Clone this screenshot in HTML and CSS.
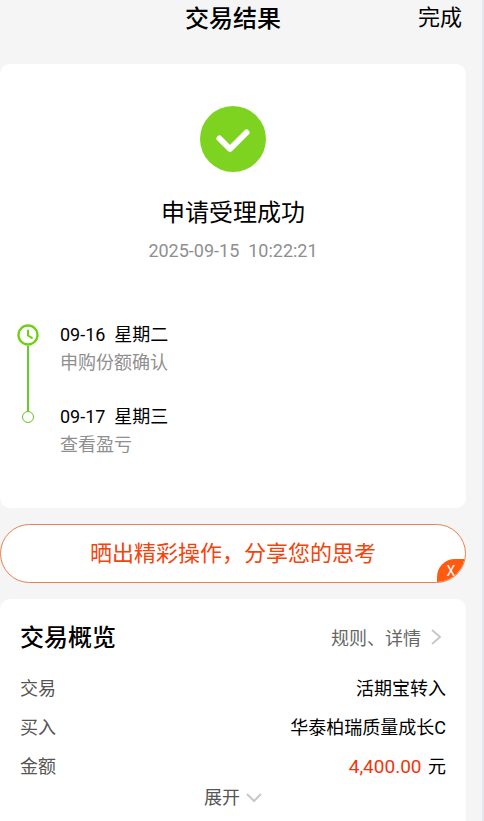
FILE: index.html
```html
<!DOCTYPE html>
<html lang="zh-CN">
<head>
    <meta charset="UTF-8">
    <meta name="viewport" content="width=device-width, initial-scale=1">
    <title>交易结果</title>
    <link rel="stylesheet" href="styles.css">
</head>
<body>
    <header class="topbar">
        <h1>交易结果</h1>
        <a class="done" href="#">完成</a>
    </header>

    <main>
        <section class="card result">
            <svg class="success-icon" viewBox="0 0 66 66" aria-hidden="true">
                <circle cx="33" cy="33" r="33" fill="#7ed321"/>
                <path d="M19.500 32.500L30 43L46.500 26.500" fill="none" stroke="#fff" stroke-width="6" stroke-linecap="round" stroke-linejoin="round"/>
            </svg>
            <h2>申请受理成功</h2>
            <time class="time">2025-09-15&nbsp; 10:22:21</time>

            <ol class="timeline">
                <li>
                    <div class="marker">
                        <svg class="clock" viewBox="0 0 22 22" aria-hidden="true">
                            <circle cx="11" cy="11" r="9.500" fill="none" stroke="#6fd010" stroke-width="2.300"/>
                            <path d="M11 6.500V11.500L14.800 13.900" fill="none" stroke="#6fd010" stroke-width="2" stroke-linecap="round" stroke-linejoin="round"/>
                        </svg>
                        <span class="line"></span>
                    </div>
                    <div class="step">
                        <p class="day">09-16&nbsp; 星期二</p>
                        <p class="desc">申购份额确认</p>
                    </div>
                </li>
                <li>
                    <div class="marker">
                        <span class="line"></span>
                        <span class="dot"></span>
                    </div>
                    <div class="step">
                        <p class="day">09-17&nbsp; 星期三</p>
                        <p class="desc">查看盈亏</p>
                    </div>
                </li>
            </ol>
        </section>

        <div class="banner">
            <a href="#">晒出精彩操作，分享您的思考</a>
            <button class="close" type="button" aria-label="关闭">X</button>
        </div>

        <section class="card overview">
            <div class="overview-header">
                <h2>交易概览</h2>
                <a class="more" href="#">规则、详情
                    <svg class="arrow-right" viewBox="0 0 10 16" aria-hidden="true">
                        <path d="M1 1L9 8L1 15" fill="none" stroke="#c8c8c8" stroke-width="2"/>
                    </svg>
                </a>
            </div>
            <dl class="rows">
                <div class="row">
                    <dt>交易</dt>
                    <dd>活期宝转入</dd>
                </div>
                <div class="row">
                    <dt>买入</dt>
                    <dd>华泰柏瑞质量成长C</dd>
                </div>
                <div class="row">
                    <dt>金额</dt>
                    <dd><span class="amount">4,400.00</span> 元</dd>
                </div>
            </dl>
            <button class="expand" type="button">展开
                <svg class="arrow-down" viewBox="0 0 16 10" aria-hidden="true">
                    <path d="M1 1L8 8L15 1" fill="none" stroke="#c8c8c8" stroke-width="2"/>
                </svg>
            </button>
        </section>
    </main>
</body>
</html>
```
FILE: styles.css
```css
* {
    box-sizing: border-box;
}
body {
    display: flex;
    flex-direction: column;
    min-height: 100vh;
    margin: 0;
    padding-right: 16px;
    border-right: 2px solid #e4e8ec;
    background: #f5f5f5;
    color: #000;
    font-family: Roboto, "Noto Sans CJK SC", sans-serif;
    font-size: 18px;
}
h1, h2, p, ol, dl, dd {
    margin: 0;
    padding: 0;
}
h1, h2 {
    font-size: 24px;
    line-height: 36px;
    font-weight: 500;
}
a {
    color: inherit;
    text-decoration: none;
}
button {
    padding: 0;
    border: 0;
    background: none;
    font-family: inherit;
    cursor: pointer;
}
svg {
    display: block;
}
main {
    display: flex;
    flex: 1;
    flex-direction: column;
    gap: 16px;
}

.topbar {
    display: grid;
    grid-template-columns: 1fr auto 1fr;
    height: 64px;
    padding: 0 4px;
}
.topbar h1 {
    grid-column: 2;
    line-height: 38px;
}
.done {
    justify-self: end;
    font-size: 22px;
    line-height: 36px;
}

.card {
    border-radius: 10px;
    background: #fff;
}

/* Result */
.result {
    display: flex;
    flex-direction: column;
    align-items: center;
    padding: 42px 16px 49px;
}
.success-icon {
    width: 66px;
    height: 66px;
    margin-bottom: 23px;
}
.result h2 {
    font-weight: 400;
}
.time {
    margin-top: 8px;
    color: #8f8f8f;
    line-height: 24px;
}
.timeline {
    align-self: stretch;
    margin-top: 58px;
    list-style: none;
}
.timeline li {
    display: flex;
    gap: 20px;
}
.timeline li:first-child .step {
    padding-bottom: 26px;
}
.marker {
    display: flex;
    flex-direction: column;
    align-items: center;
    width: 24px;
}
.clock {
    width: 22px;
    height: 22px;
    margin-top: 3px;
}
.line {
    flex: 1;
    width: 2px;
    background: #6cc832;
}
.timeline li:last-child .line {
    flex: none;
    height: 8px;
}
.dot {
    width: 12px;
    height: 12px;
    border: 1px solid #62c41c;
    border-radius: 50%;
}
.step {
    line-height: 28px;
}
.desc {
    color: #8f8f8f;
}

/* Share banner */
.banner {
    position: relative;
    overflow: hidden;
    border: 1px solid #e58150;
    border-radius: 30px;
    background: #fff;
    color: #f5430c;
    font-size: 22px;
    line-height: 57px;
    text-align: center;
}
.banner a {
    display: block;
}
.close {
    position: absolute;
    right: 0;
    bottom: 0;
    width: 28px;
    height: 23px;
    border-radius: 18px 0 0 0;
    background: #ff5a10;
    color: #fff;
    font-size: 14px;
}

/* Overview */
.overview {
    flex: 1;
    padding: 20px 20px 13px;
    border-radius: 10px 10px 0 0;
}
.overview-header {
    display: flex;
    justify-content: space-between;
    margin-bottom: 12px;
}
.overview-header h2 {
    line-height: 38px;
}
.more {
    display: flex;
    align-items: center;
    gap: 10px;
    height: 35px;
    padding-right: 5px;
    color: #666;
}
.arrow-right {
    width: 10px;
    height: 16px;
}
.row {
    display: flex;
    justify-content: space-between;
    line-height: 39px;
}
.row dt {
    color: #555;
}
.amount {
    margin-right: 2px;
    color: #f5330c;
    font-size: 19px;
}
.expand {
    display: flex;
    align-items: center;
    gap: 6px;
    margin: 2px auto 0;
    color: #555;
    font-size: 18px;
    line-height: 20px;
}
.arrow-down {
    width: 16px;
    height: 10px;
}
```
